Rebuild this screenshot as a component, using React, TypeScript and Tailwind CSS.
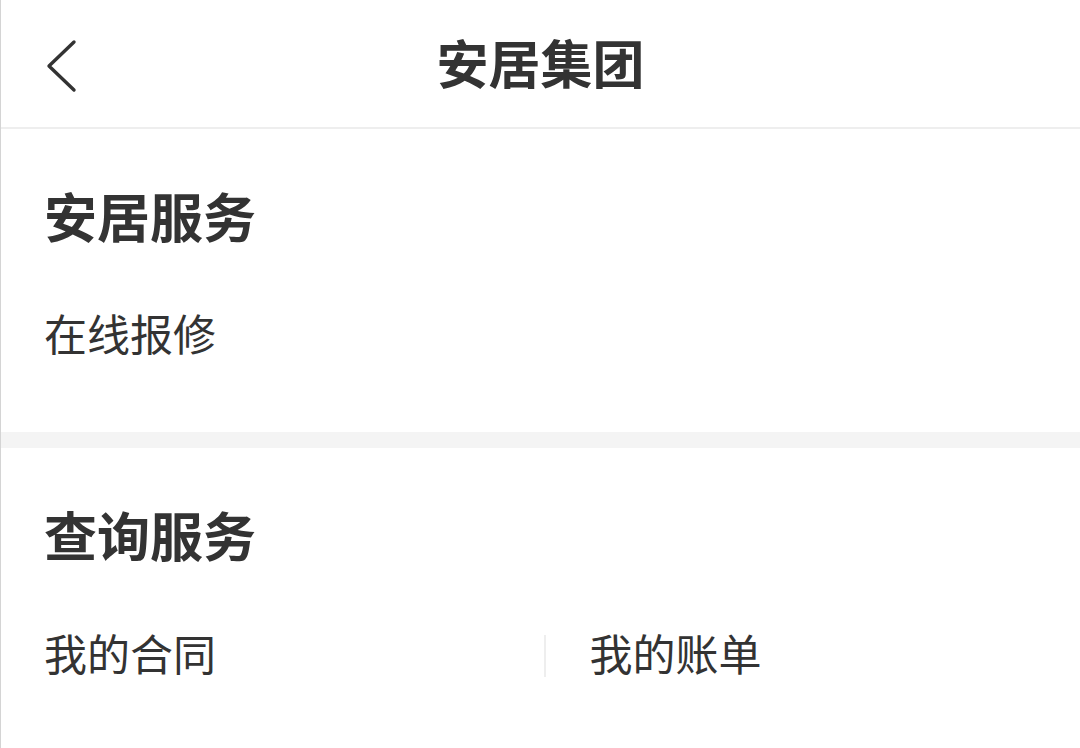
import React from 'react';

const font = { fontFamily: '"Noto Sans CJK SC", "Noto Sans", sans-serif' };

const App: React.FC = () => {
  return (
    <div className="w-[1080px] h-[748px] overflow-hidden bg-white border-l border-[#d4d4d4] text-[#333333]" style={font}>
      {/* header */}
      <div className="relative h-[129px] border-b-2 border-[#eeeeee] flex items-center justify-center">
        <svg className="absolute left-[40px] top-[36px]" width="44" height="60" viewBox="0 0 44 60">
          <polyline points="33,6 8,30 33,54" fill="none" stroke="#333333" strokeWidth="3.4" strokeLinecap="round" strokeLinejoin="round" />
        </svg>
        <h1 className="text-[52px] font-bold leading-none mb-[4px]">安居集团</h1>
      </div>

      {/* 安居服务 */}
      <div className="pt-[56px] pb-[70px] px-[43px]">
        <h2 className="text-[53px] font-bold leading-[60px]">安居服务</h2>
        <div className="mt-[57px] text-[43px] leading-[60px]">在线报修</div>
      </div>

      <div className="h-[16px] bg-[#f4f4f4]" />

      {/* 查询服务 */}
      <div className="pt-[56px] px-[43px]">
        <h2 className="text-[53px] font-bold leading-[60px]">查询服务</h2>
        <div className="mt-[58px] grid grid-cols-2">
          <div className="text-[43px] leading-[60px]">我的合同</div>
          <div className="flex items-center">
            <div className="w-[2px] h-[42px] bg-[#eeeeee] ml-[3px] mt-[8px]" />
            <div className="ml-[44px] text-[43px] leading-[60px]">我的账单</div>
          </div>
        </div>
      </div>
    </div>
  );
};

export default App;
